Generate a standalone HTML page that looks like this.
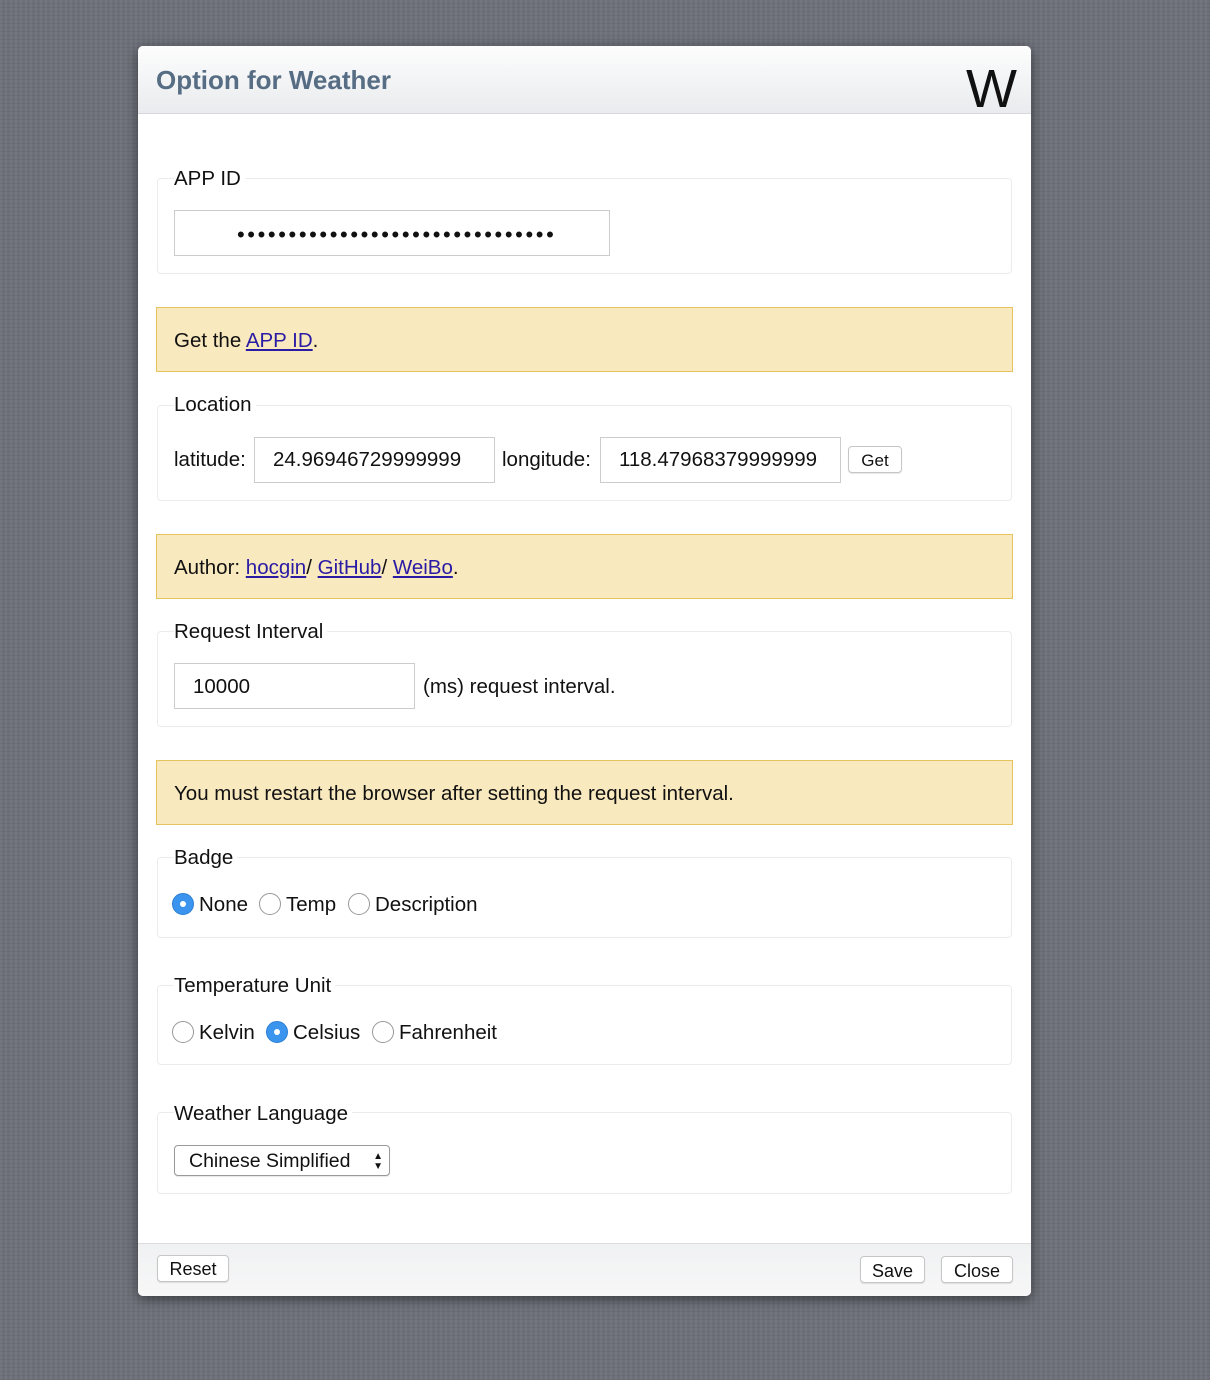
<!DOCTYPE html>
<html><head><meta charset="utf-8"><style>
*{box-sizing:border-box}
body{margin:0;width:1210px;height:1380px;background:#6d7079;background-image:repeating-linear-gradient(90deg,rgba(255,255,255,.04) 0 2px,transparent 2px 5px),repeating-linear-gradient(0deg,rgba(0,0,0,.05) 0 1px,transparent 1px 4px);font-family:"Liberation Sans",sans-serif;color:#111;position:relative;overflow:hidden}
.win{position:absolute;left:138px;top:46px;width:893px;height:1250px;background:#fff;border-radius:5px;box-shadow:0 3px 12px rgba(0,0,0,.5);overflow:hidden}
.hd{position:absolute;left:0;top:0;width:893px;height:68px;background:linear-gradient(#fdfdfd,#e9ebee);border-bottom:1px solid #d6d8db}
.hd h1{margin:0;position:absolute;left:18px;top:19px;font-size:26px;font-weight:bold;color:#566d84}
.hd .w{position:absolute;right:14px;top:16px;font-size:54px;line-height:54px;color:#111}
.fs{position:absolute;left:19px;width:855px;border:1px solid #ececec;border-radius:4px}
.lg{position:absolute;left:36px;font-size:20.5px;background:#fff;padding:0 4px 0 0}
.in{position:absolute;height:46px;border:1px solid #ccc;font-size:20.5px;padding:0 18px;line-height:44px;white-space:nowrap;overflow:hidden;background:#fff}
.al{position:absolute;left:18px;width:857px;height:65px;background:#f9e9bf;border:1px solid #e7c35f;font-size:20.5px;padding-left:17px;line-height:65px}
a{color:#2a1ba5}
.t{position:absolute;font-size:20.5px;line-height:24px}
.btn{position:absolute;border:1px solid #c6c6c6;border-radius:4px;background:#fff;font-size:18px;text-align:center;box-shadow:0 1px 1px rgba(0,0,0,.1)}
.r{position:absolute;width:22px;height:22px;border-radius:50%;border:1px solid #999;background:#fff}
.r.on{background:#3b95ee;border-color:#2c7fd6}
.r.on:after{content:"";position:absolute;left:7px;top:7px;width:6px;height:6px;border-radius:50%;background:#fff}
.ft{position:absolute;left:0;top:1197px;width:893px;height:53px;background:linear-gradient(#f0f1f2,#f7f7f8);border-top:1px solid #dcdcdc}
</style></head><body>
<div class="win">
<div class="hd"><h1>Option for Weather</h1><div class="w">W</div></div>

<div class="fs" style="top:132px;height:96px"></div>
<div class="lg" style="top:121px">APP ID</div>
<div class="in" style="left:36px;top:164px;width:436px;letter-spacing:2.6px;padding-left:62px;font-size:22px;line-height:48px">•••••••••••••••••••••••••••••••</div>

<div class="al" style="top:261px">Get the <a href="#">APP ID</a>.</div>

<div class="fs" style="top:359px;height:96px"></div>
<div class="lg" style="top:347px">Location</div>
<div class="t" style="left:36px;top:402px">latitude:</div>
<div class="in" style="left:116px;top:391px;width:241px">24.96946729999999</div>
<div class="t" style="left:364px;top:402px">longitude:</div>
<div class="in" style="left:462px;top:391px;width:241px">118.47968379999999</div>
<div class="btn" style="left:710px;top:400px;width:54px;height:27px;font-size:17px;line-height:27px">Get</div>

<div class="al" style="top:488px">Author: <a href="#">hocgin</a>/ <a href="#">GitHub</a>/ <a href="#">WeiBo</a>.</div>

<div class="fs" style="top:585px;height:96px"></div>
<div class="lg" style="top:574px">Request Interval</div>
<div class="in" style="left:36px;top:617px;width:241px;line-height:46px">10000</div>
<div class="t" style="left:285px;top:629px">(ms) request interval.</div>

<div class="al" style="top:714px">You must restart the browser after setting the request interval.</div>

<div class="fs" style="top:811px;height:81px"></div>
<div class="lg" style="top:800px">Badge</div>
<div class="r on" style="left:34px;top:847px"></div><div class="t" style="left:61px;top:847px">None</div>
<div class="r" style="left:121px;top:847px"></div><div class="t" style="left:148px;top:847px">Temp</div>
<div class="r" style="left:210px;top:847px"></div><div class="t" style="left:237px;top:847px">Description</div>

<div class="fs" style="top:939px;height:80px"></div>
<div class="lg" style="top:928px">Temperature Unit</div>
<div class="r" style="left:34px;top:975px"></div><div class="t" style="left:61px;top:975px">Kelvin</div>
<div class="r on" style="left:128px;top:975px"></div><div class="t" style="left:155px;top:975px">Celsius</div>
<div class="r" style="left:234px;top:975px"></div><div class="t" style="left:261px;top:975px">Fahrenheit</div>

<div class="fs" style="top:1066px;height:82px"></div>
<div class="lg" style="top:1056px">Weather Language</div>
<div class="btn" style="left:36px;top:1099px;width:216px;height:31px;text-align:left;padding-left:14px;font-size:19.5px;line-height:30px;border-color:#999">Chinese Simplified<span style="position:absolute;right:6px;top:0;font-size:10px;line-height:10px;padding-top:6px">▲<br>▼</span></div>

<div class="ft">
<div class="btn" style="left:19px;top:11px;width:72px;height:27px;line-height:27px">Reset</div>
<div class="btn" style="left:722px;top:12px;width:65px;height:27px;line-height:29px">Save</div>
<div class="btn" style="left:803px;top:12px;width:72px;height:27px;line-height:29px">Close</div>
</div>
</div>
</body></html>
